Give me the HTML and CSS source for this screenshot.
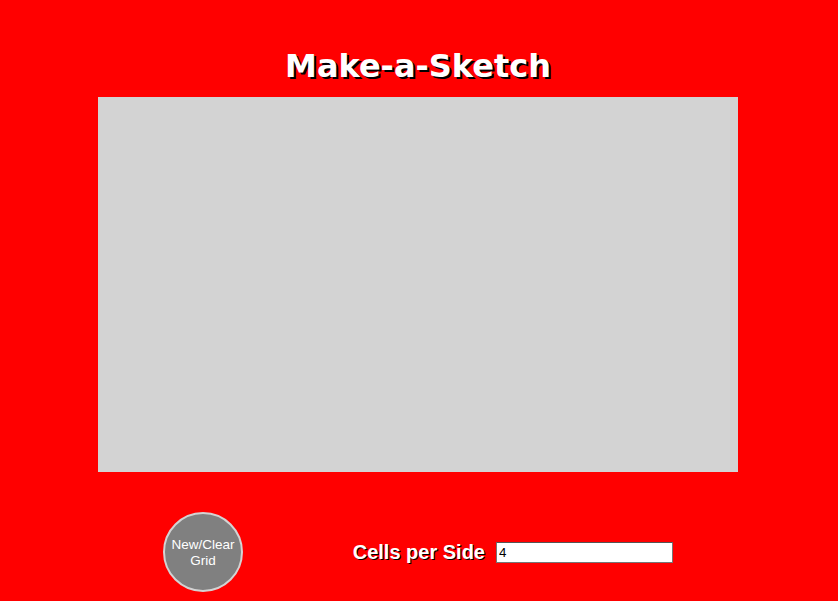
FILE: index.html
```html
<!DOCTYPE html>
<html>
<head>
<meta charset="utf-8">
<link rel="stylesheet" href="styles.css">
</head>
<body>
<div class="page">
  <h1 class="title">Make-a-Sketch</h1>
  <div class="board"></div>
  <div class="controls">
    <button class="clear-btn">New/Clear<br>Grid</button>
    <label class="cells">
      <span class="cells-label">Cells per Side</span>
      <input class="cells-input" type="text" value="4">
    </label>
  </div>
</div>
</body>
</html>
```
FILE: styles.css
```css
html, body {
  margin: 0;
  padding: 0;
  background: #ff0000;
}
.page {
  width: 640px;
  margin: 0 auto;
  padding-right: 2px;
  display: flex;
  flex-direction: column;
  align-items: stretch;
}
.title {
  margin: 46px 0 11px;
  height: 40px;
  line-height: 40px;
  text-align: center;
  font-family: "DejaVu Sans", sans-serif;
  font-weight: bold;
  font-size: 32px;
  color: #fff;
  text-shadow: 2px 2px 0 #000;
}
.board {
  height: 375px;
  background: #d3d3d3;
}
.controls {
  margin-top: 40px;
  padding: 0 65px;
  display: flex;
  justify-content: space-between;
  align-items: center;
}
.clear-btn {
  box-sizing: border-box;
  width: 80px;
  height: 80px;
  border-radius: 50%;
  border: 2px solid #d3d3d3;
  background: #808080;
  color: #fff;
  font-family: "Liberation Sans", Arial, sans-serif;
  font-size: 13.5px;
  line-height: 16px;
  padding: 2px 0 0;
}
.cells {
  display: flex;
  align-items: center;
  gap: 11px;
}
.cells-label {
  font-family: "Liberation Sans", Arial, sans-serif;
  font-weight: bold;
  font-size: 20px;
  color: #fff;
  text-shadow: 1px 1px 0 #000;
}
.cells-input {
  box-sizing: border-box;
  width: 177px;
  height: 21px;
  margin: 0;
  padding: 1px 2px;
  border: 1px solid #767676;
  border-top-color: #555;
  font-family: "Liberation Sans", Arial, sans-serif;
  font-size: 13.33px;
  color: #000;
  background: #fff;
}
```
